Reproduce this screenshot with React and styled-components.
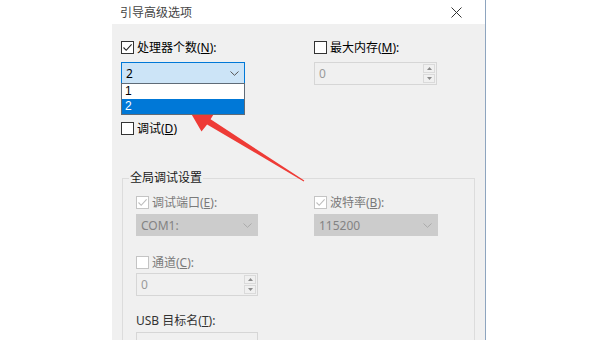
import React from "react";
import styled, { createGlobalStyle } from "styled-components";

const GlobalStyle = createGlobalStyle`
  html, body {
    margin: 0;
    padding: 0;
    background: #fff;
  }
  body {
    font-family: "Noto Sans", "Noto Sans CJK SC", sans-serif;
    font-size: 12px;
    color: #000;
  }
`;

const Page = styled.div`
  position: relative;
  width: 600px;
  height: 340px;
  overflow: hidden;
  padding-left: 112px;
  box-sizing: border-box;
`;

const Dialog = styled.div`
  width: 374px;
  height: 340px;
  display: flex;
  flex-direction: column;
  border-right: 1px solid #8ea5bf;
  box-sizing: border-box;
`;

const TitleBar = styled.div`
  height: 24px;
  flex: none;
  background: #fff;
  display: flex;
  align-items: center;
  justify-content: space-between;
  padding: 0 23px 0 8px;
  color: #444;
`;

const Body = styled.div`
  flex: 1;
  background: #f0f0f0;
  padding: 17px 0 0 9px;
  overflow: hidden;
`;

const Columns = styled.div`
  display: grid;
  grid-template-columns: ${(p) => p.$first}px auto;
  align-items: start;
  margin-top: ${(p) => p.$top || 0}px;
`;

const Field = styled.div`
  display: flex;
  flex-direction: column;
  align-items: flex-start;
  gap: ${(p) => p.$gap}px;
`;

const CheckRow = styled.label`
  display: flex;
  align-items: center;
  gap: 3px;
  height: 13px;
  line-height: 13px;
  margin-top: ${(p) => p.$top || 0}px;
  color: ${(p) => (p.$disabled ? "#7a7a7a" : "#000")};
  white-space: nowrap;
`;

const Box = styled.span`
  width: 13px;
  height: 13px;
  box-sizing: border-box;
  border: 1px solid ${(p) => (p.$disabled ? "#c4c4c4" : "#333")};
  background: #fff;
  display: flex;
  align-items: center;
  justify-content: center;
`;

const U = styled.span`
  text-decoration: underline;
`;

const Label = styled.div`
  height: 13px;
  line-height: 13px;
  color: #333;
  white-space: nowrap;
`;

const ComboWrap = styled.div`
  position: relative;
`;

const Combo = styled.div`
  width: ${(p) => p.$w}px;
  height: 22px;
  box-sizing: border-box;
  border: 1px solid ${(p) => (p.$open ? "#0078d7" : "#cccccc")};
  background: ${(p) => (p.$open ? "#cce4f7" : "#cccccc")};
  color: ${(p) => (p.$open ? "#000" : "#838383")};
  display: flex;
  align-items: center;
  justify-content: space-between;
  padding: 0 5px 0 4px;
  font-size: 12px;
`;

const Spin = styled.div`
  width: ${(p) => p.$w}px;
  height: 23px;
  box-sizing: border-box;
  border: 1px solid #d6d6d6;
  background: #f0f0f0;
  color: #9a9a9a;
  display: flex;
  align-items: center;
  justify-content: space-between;
  padding: 0 1px 0 4px;
`;

const SpinButtons = styled.div`
  display: flex;
  flex-direction: column;
  gap: 1px;
`;

const SpinButton = styled.div`
  width: 12px;
  height: 9px;
  box-sizing: border-box;
  border: 1px solid #dadada;
  display: flex;
  align-items: center;
  justify-content: center;
`;

const TextBox = styled.div`
  width: ${(p) => p.$w}px;
  height: 22px;
  box-sizing: border-box;
  border: 1px solid #d6d6d6;
  background: #f0f0f0;
`;

const DropList = styled.ul`
  position: absolute;
  top: 21px;
  left: 0;
  width: 124px;
  margin: 0;
  padding: 0;
  list-style: none;
  box-sizing: border-box;
  border: 1px solid #5f6b77;
  background: #fff;
  z-index: 2;
  font-family: "Liberation Sans", "Noto Sans", sans-serif;
`;

const DropItem = styled.li`
  height: 15px;
  line-height: 15px;
  padding-left: 3px;
  background: ${(p) => (p.$active ? "#0078d7" : "#fff")};
  color: ${(p) => (p.$active ? "#fff" : "#000")};
`;

const GroupBox = styled.fieldset`
  margin: 35px 0 0 1px;
  padding: 0 0 30px 0;
  width: 353px;
  box-sizing: border-box;
  border: 1px solid #dcdcdc;
  min-inline-size: 0;
`;

const Legend = styled.legend`
  margin-left: 6px;
  padding: 0 1px;
  line-height: 16px;
  color: #1a1a1a;
`;

const GroupInner = styled.div`
  padding: 10px 0 0 13px;
`;

const ArrowLayer = styled.svg`
  position: absolute;
  left: 0;
  top: 0;
  pointer-events: none;
`;

const Check = ({ color }) => (
  <svg width="11" height="11" viewBox="0 0 11 11">
    <path d="M1.5 5.5 L4.2 8.3 L9.6 2.4" fill="none" stroke={color} strokeWidth="1.1" />
  </svg>
);

const Chevron = ({ color }) => (
  <svg width="9" height="5" viewBox="0 0 9 5">
    <path d="M0.5 0.5 L4.5 4.3 L8.5 0.5" fill="none" stroke={color} strokeWidth="1" />
  </svg>
);

const Tri = ({ up }) => (
  <svg width="5" height="3" viewBox="0 0 5 3">
    <path d={up ? "M0 3 L2.5 0 L5 3 Z" : "M0 0 L2.5 3 L5 0 Z"} fill="#8a8a8a" />
  </svg>
);

const CheckBox = ({ checked, disabled, top, children }) => (
  <CheckRow $disabled={disabled} $top={top}>
    <Box $disabled={disabled}>{checked && <Check color={disabled ? "#bdbdbd" : "#222"} />}</Box>
    <span>{children}</span>
  </CheckRow>
);

const SpinBox = ({ w, value }) => (
  <Spin $w={w}>
    <span>{value}</span>
    <SpinButtons>
      <SpinButton>
        <Tri up />
      </SpinButton>
      <SpinButton>
        <Tri />
      </SpinButton>
    </SpinButtons>
  </Spin>
);

const App = () => {
  return (
    <>
      <GlobalStyle />
      <Page>
        <Dialog>
          <TitleBar>
            <span>引导高级选项</span>
            <svg width="11" height="11" viewBox="0 0 11 11">
              <path d="M0.5 0.5 L10.5 10.5 M10.5 0.5 L0.5 10.5" stroke="#333" strokeWidth="1" />
            </svg>
          </TitleBar>
          <Body>
            <Columns $first={193}>
              <Field $gap={8}>
                <CheckBox checked>
                  处理器个数(<U>N</U>):
                </CheckBox>
                <ComboWrap>
                  <Combo $w={124} $open>
                    <span>2</span>
                    <Chevron color="#555" />
                  </Combo>
                  <DropList>
                    <DropItem>1</DropItem>
                    <DropItem $active>2</DropItem>
                  </DropList>
                </ComboWrap>
              </Field>
              <Field $gap={8}>
                <CheckBox>
                  最大内存(<U>M</U>):
                </CheckBox>
                <SpinBox w={123} value="0" />
              </Field>
            </Columns>
            <CheckBox top={37}>
              调试(<U>D</U>)
            </CheckBox>
            <GroupBox>
              <Legend>全局调试设置</Legend>
              <GroupInner>
                <Columns $first={178}>
                  <Field $gap={5}>
                    <CheckBox checked disabled>
                      调试端口(<U>E</U>):
                    </CheckBox>
                    <Combo $w={122}>
                      <span>COM1:</span>
                      <Chevron color="#aaa" />
                    </Combo>
                  </Field>
                  <Field $gap={5}>
                    <CheckBox checked disabled>
                      波特率(<U>B</U>):
                    </CheckBox>
                    <Combo $w={124}>
                      <span>115200</span>
                      <Chevron color="#aaa" />
                    </Combo>
                  </Field>
                </Columns>
                <Columns $first={178} $top={20}>
                  <Field $gap={4}>
                    <CheckBox disabled>
                      通道(<U>C</U>):
                    </CheckBox>
                    <SpinBox w={122} value="0" />
                  </Field>
                </Columns>
                <Columns $first={178} $top={18}>
                  <Field $gap={5}>
                    <Label>
                      USB 目标名(<U>T</U>):
                    </Label>
                    <TextBox $w={122} />
                  </Field>
                </Columns>
              </GroupInner>
            </GroupBox>
          </Body>
        </Dialog>
        <ArrowLayer width="600" height="340" viewBox="0 0 600 340">
          <polygon
            points="189,110 215,112 210.6,119.2 304.3,180.6 303.7,181.4 207.1,124.4 201.5,131.5"
            fill="#ee3b36"
          />
        </ArrowLayer>
      </Page>
    </>
  );
};

export default App;
